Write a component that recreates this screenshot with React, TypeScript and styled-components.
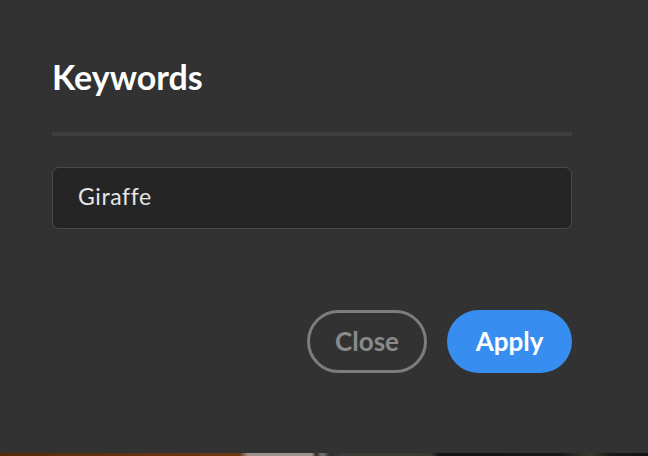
import React from "react";
import styled, { createGlobalStyle } from "styled-components";

const Global = createGlobalStyle`
  html, body { margin: 0; padding: 0; background: #323232; }
  body { width: 648px; height: 456px; overflow: hidden; font-family: Lato, "Open Sans", sans-serif; }
  #root { height: 456px; }
`;

const Screen = styled.div`
  width: 648px;
  height: 456px;
  display: flex;
  flex-direction: column;
  background: #323232;
`;

const Dialog = styled.div`
  flex: 1;
  display: flex;
  flex-direction: column;
  padding: 55px 76px 0 52px;
`;

const Title = styled.h2`
  margin: 0;
  font-family: Lato, sans-serif;
  font-weight: 700;
  font-size: 34px;
  line-height: 44px;
  color: #ffffff;
`;

const Divider = styled.div`
  height: 4px;
  background: #3e3e3e;
  margin-top: 33px;
`;

const Field = styled.div`
  margin-top: 31px;
  height: 60px;
  box-sizing: content-box;
  border: 1px solid #4a4a4a;
  border-radius: 7px;
  background: #252525;
  display: flex;
  align-items: center;
  padding: 0 0 4px 25px;
  height: 56px;
  font-family: Lato, sans-serif;
  font-size: 23px;
  letter-spacing: 0.6px;
  color: #e6e6e6;
`;

const Actions = styled.div`
  margin-top: 81px;
  display: flex;
  justify-content: flex-end;
  gap: 20px;
`;

const Button = styled.button<{ $primary?: boolean }>`
  height: 63px;
  box-sizing: border-box;
  border-radius: 32px;
  font-family: Lato, sans-serif;
  font-weight: 700;
  font-size: 26px;
  padding: 0 0 2px;
  width: ${(p) => (p.$primary ? "125px" : "120px")};
  border: ${(p) => (p.$primary ? "none" : "3px solid #7d7d7d")};
  background: ${(p) => (p.$primary ? "#378ef0" : "transparent")};
  color: ${(p) => (p.$primary ? "#ffffff" : "#8a8a8a")};
`;

const PhotoStrip = styled.div`
  height: 3px;
  background: linear-gradient(
    to right,
    #552a0b 0px,
    #6e3812 240px,
    #9b928c 248px,
    #9a918b 312px,
    #2c2c2c 316px,
    #7a7a74 322px,
    #2b3038 330px,
    #3b3d36 345px,
    #3a3b34 430px,
    #141414 440px,
    #181818 560px,
    #3a3a30 590px,
    #1a1a1a 610px,
    #141414 648px
  );
`;

export default function App() {
  return (
    <Screen>
      <Global />
      <Dialog>
        <Title>Keywords</Title>
        <Divider />
        <Field>Giraffe</Field>
        <Actions>
          <Button>Close</Button>
          <Button $primary>Apply</Button>
        </Actions>
      </Dialog>
      <PhotoStrip />
    </Screen>
  );
}
